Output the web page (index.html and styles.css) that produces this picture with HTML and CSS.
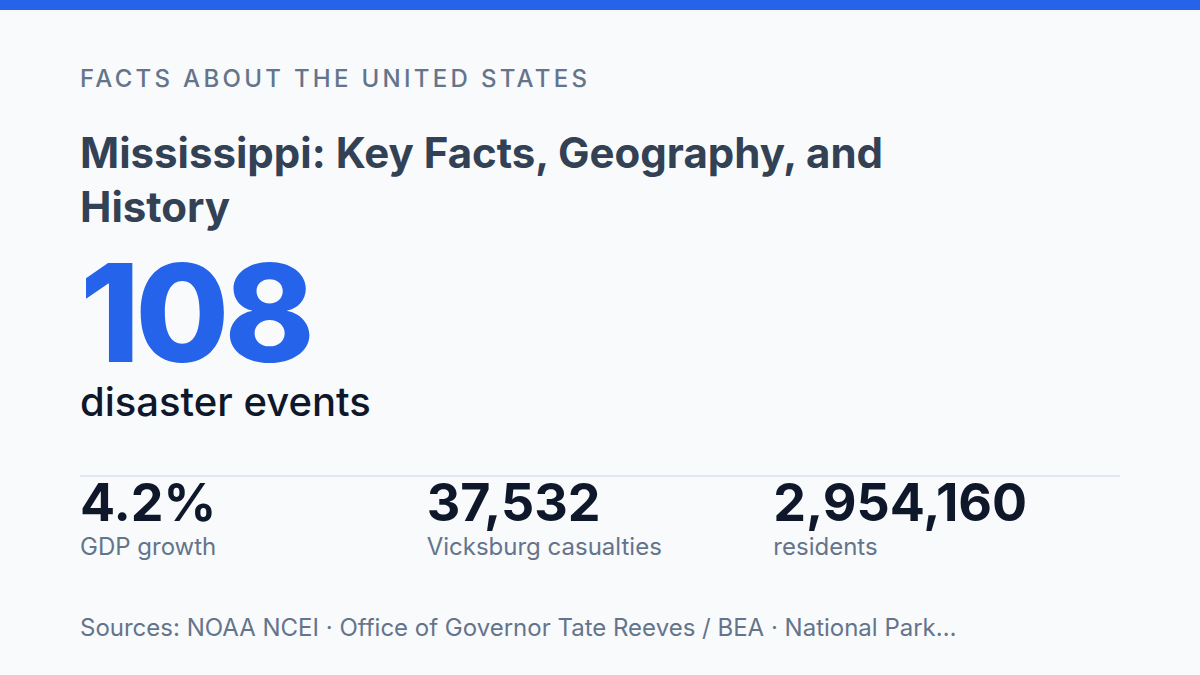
FILE: index.html
```html
<!DOCTYPE html>
<html lang="en">
<head>
<meta charset="utf-8">
<title>Mississippi: Key Facts</title>
<link rel="stylesheet" href="styles.css">
</head>
<body>
<div class="bar"></div>
<main class="content">
  <div class="eyebrow">FACTS ABOUT THE UNITED STATES</div>
  <h1 class="title">Mississippi: Key Facts, Geography, and History</h1>
  <div class="hero-num">108</div>
  <div class="hero-label">disaster events</div>
  <div class="stats">
    <div class="stat">
      <div class="stat-value">4.2%</div>
      <div class="stat-label">GDP growth</div>
    </div>
    <div class="stat">
      <div class="stat-value">37,532</div>
      <div class="stat-label">Vicksburg casualties</div>
    </div>
    <div class="stat">
      <div class="stat-value">2,954,160</div>
      <div class="stat-label">residents</div>
    </div>
  </div>
  <div class="sources">Sources: NOAA NCEI · Office of Governor Tate Reeves / BEA · National Park…</div>
</main>
</body>
</html>
```
FILE: styles.css
```css
html, body {
  margin: 0;
  padding: 0;
}
body {
  width: 1200px;
  height: 675px;
  overflow: hidden;
  background: #f8fafc;
  font-family: Inter, "Noto Sans", "Liberation Sans", sans-serif;
}
.bar {
  height: 10px;
  background: #2563eb;
}
.content {
  display: flex;
  flex-direction: column;
  padding: 54px 80px 0 80px;
}
.eyebrow {
  font-size: 24px;
  line-height: 29px;
  font-weight: 500;
  letter-spacing: 3.3px;
  color: #64748b;
}
.title {
  margin: 33px 0 0 0;
  max-width: 880px;
  font-size: 42px;
  line-height: 54px;
  font-weight: 700;
  color: #334155;
}
.hero-num {
  margin-top: 11px;
  font-size: 136px;
  line-height: 135px;
  font-weight: 800;
  letter-spacing: -0.035em;
  color: #2563eb;
}
.hero-label {
  margin-top: 0;
  font-size: 40px;
  line-height: 44px;
  font-weight: 500;
  color: #0f172a;
}
.stats {
  margin-top: 51px;
  border-top: 2px solid #e2e8f0;
  display: grid;
  grid-template-columns: repeat(3, 1fr);
}
.stat-value {
  font-size: 52px;
  line-height: 52px;
  font-weight: 700;
  color: #0f172a;
}
.stat-label {
  margin-top: 3px;
  font-size: 24px;
  line-height: 30px;
  color: #64748b;
}
.sources {
  margin-top: 51px;
  font-size: 24px;
  line-height: 30px;
  color: #64748b;
  white-space: nowrap;
}
```
